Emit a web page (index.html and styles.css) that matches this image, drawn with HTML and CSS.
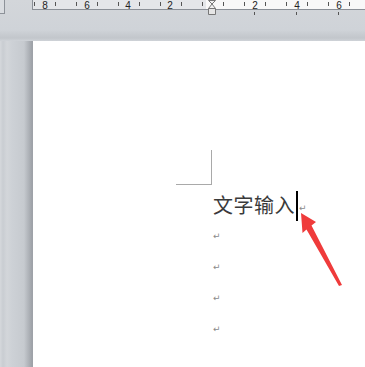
FILE: index.html
```html
<!DOCTYPE html>
<html lang="zh">
<head>
<meta charset="utf-8">
<link rel="stylesheet" href="styles.css">
</head>
<body>
<div class="top">
  <div class="btn"></div>
  <svg class="ruler" width="333" height="16" viewBox="0 0 333 16">
    <rect x="0" y="0" width="174" height="9" fill="#e4e6e9"/>
    <rect x="174" y="0" width="159" height="9" fill="#f8f8f8"/>
    <line x1="0.5" y1="0" x2="0.5" y2="9.5" stroke="#8b9097"/>
    <line x1="0" y1="9.5" x2="333" y2="9.5" stroke="#8b9097"/>
    <g stroke="#555" stroke-width="1">
      <line x1="2.5" y1="2" x2="2.5" y2="6"/>
      <line x1="23.5" y1="2" x2="23.5" y2="6"/>
      <line x1="44.5" y1="2" x2="44.5" y2="6"/>
      <line x1="65.5" y1="2" x2="65.5" y2="6"/>
      <line x1="86.5" y1="2" x2="86.5" y2="6"/>
      <line x1="107.5" y1="2" x2="107.5" y2="6"/>
      <line x1="128.5" y1="2" x2="128.5" y2="6"/>
      <line x1="149.5" y1="2" x2="149.5" y2="6"/>
      <line x1="170.5" y1="2" x2="170.5" y2="6"/>
      <line x1="191.5" y1="2" x2="191.5" y2="6"/>
      <line x1="212.5" y1="2" x2="212.5" y2="6"/>
      <line x1="233.5" y1="2" x2="233.5" y2="6"/>
      <line x1="254.5" y1="2" x2="254.5" y2="6"/>
      <line x1="275.5" y1="2" x2="275.5" y2="6"/>
      <line x1="296.5" y1="2" x2="296.5" y2="6"/>
      <line x1="317.5" y1="2" x2="317.5" y2="6"/>
      <line x1="222.5" y1="12" x2="222.5" y2="15"/>
      <line x1="264.5" y1="12" x2="264.5" y2="15"/>
      <line x1="306.5" y1="12" x2="306.5" y2="15"/>
    </g>
    <g class="nums" font-size="10" fill="#222" text-anchor="middle">
      <text x="13" y="8.5">8</text>
      <text x="55" y="8.5">6</text>
      <text x="96" y="8.5">4</text>
      <text x="138" y="8.5">2</text>
      <text x="223" y="8.5">2</text>
      <text x="265" y="8.5">4</text>
      <text x="307" y="8.5">6</text>
    </g>
    <path d="M176.5 0.5 L183.5 0.5 L180 4 Z M180 4 L183.5 8.5 L176.5 8.5 Z" fill="#f2f2f2" stroke="#777" stroke-width="1"/>
    <path d="M176.5 8.5 L183.5 8.5 L183.5 14.5 L176.5 14.5 Z" fill="#e6e6e6" stroke="#777" stroke-width="1"/>
  </svg>
</div>
<div class="stage">
  <div class="page">
    <div class="corner"></div>
    <div class="body-text">
      <p class="line first">文字输入<span class="caret"></span><span class="ret">↵</span></p>
      <p class="line"><span class="ret">↵</span></p>
      <p class="line"><span class="ret">↵</span></p>
      <p class="line"><span class="ret">↵</span></p>
      <p class="line"><span class="ret">↵</span></p>
    </div>
    <svg class="arrow" width="50" height="80" viewBox="0 0 50 80">
      <path d="M3 1 L18 10 L13.5 13.5 L44 73 L41 74 L8.5 17.5 L4.5 21 Z" fill="#ef3b3b"/>
    </svg>
  </div>
</div>
</body>
</html>
```
FILE: styles.css
```css
html, body {
  margin: 0;
  padding: 0;
}
body {
  width: 365px;
  height: 367px;
  overflow: hidden;
  background: linear-gradient(to bottom, #d3d6da 0px, #cfd3d8 30px, #c2c6cb 38px, #cfd3d8 41px);
  font-family: "Liberation Sans", Arial, sans-serif;
}
.top {
  display: flex;
  align-items: flex-start;
  height: 41px;
}
.btn {
  width: 4px;
  height: 13px;
  border: 1px solid #8d9299;
  border-left: none;
  border-top: none;
  background: #dadde1;
}
.ruler {
  display: block;
  margin-left: 27px;
  flex: none;
}
.nums {
  font-family: "Liberation Sans", Arial, sans-serif;
}
.stage {
  height: 326px;
  background: linear-gradient(to right, #d5d8dc 0px, #c9cdd2 3px, #d3d6da 7px, #cdd1d6 12px, #c6cacf 24px, #9ea2a8 32px, #9ea2a8 33px);
  padding-left: 33px;
}
.page {
  position: relative;
  width: 332px;
  height: 326px;
  background: #fff;
  padding-top: 109px;
  padding-left: 143px;
  box-sizing: border-box;
}
.corner {
  width: 36px;
  height: 35px;
  border-right: 1px solid #a9a9a9;
  border-bottom: 1px solid #a9a9a9;
  box-sizing: border-box;
}
.body-text {
  margin-left: 37px;
  margin-top: 3px;
}
.line {
  margin: 0;
  height: 31px;
  line-height: 31px;
  font-family: "Noto Sans CJK SC", "Noto Sans", sans-serif;
  font-size: 20px;
  color: #3a3a3a;
  white-space: nowrap;
  letter-spacing: 0.5px;
}
.line.first {
  height: 33px;
  line-height: 33px;
}
.caret {
  display: inline-block;
  width: 2px;
  height: 30px;
  background: #000;
  vertical-align: -8px;
  margin-left: 1px;
}
.ret {
  font-family: "DejaVu Sans", sans-serif;
  font-size: 9px;
  color: #8a8a8a;
  vertical-align: top;
  letter-spacing: 0;
}
.first .ret {
  margin-left: 1px;
  vertical-align: 2px;
}
.arrow {
  position: absolute;
  left: 265px;
  top: 171px;
}
```
